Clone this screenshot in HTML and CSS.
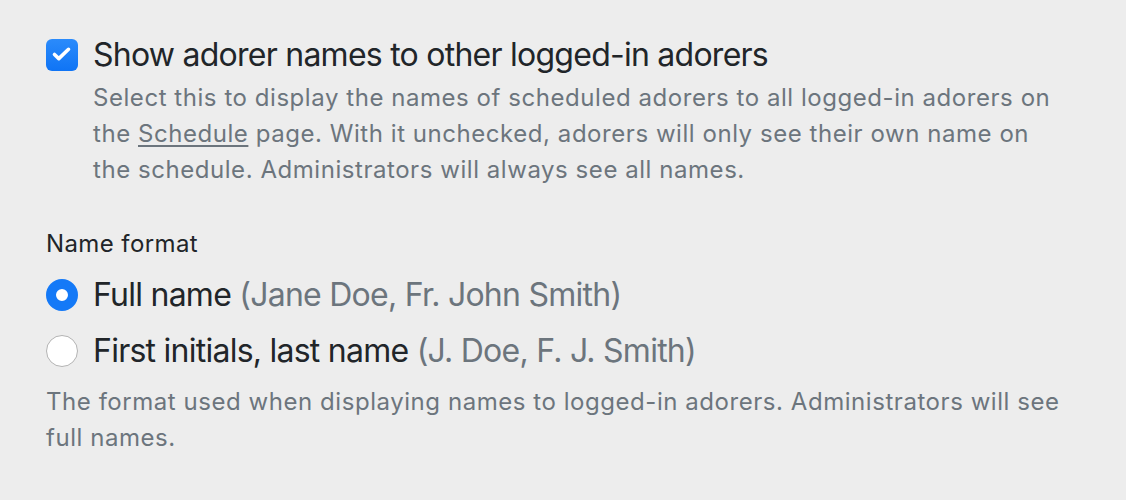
FILE: index.html
```html
<!DOCTYPE html>
<html lang="en">
<head>
<meta charset="utf-8">
<title>Name settings</title>
<link rel="stylesheet" href="styles.css">
</head>
<body>
<div class="settings">
  <div class="check-row">
    <span class="checkbox">
      <svg viewBox="0 0 32 32" width="32" height="32"><path d="M8.5 15.5 L12.8 19.6 L22.5 10.3" fill="none" stroke="#fff" stroke-width="3.6" stroke-linecap="round" stroke-linejoin="round"/></svg>
    </span>
    <span class="title">Show adorer names to other logged-in adorers</span>
    <p class="help indent">Select this to display the names of scheduled adorers to all logged-in adorers on the <a class="link" href="#">Schedule</a> page. With it unchecked, adorers will only see their own name on the schedule. Administrators will always see all names.</p>
  </div>

  <div class="group-label">Name format</div>
  <div class="radios">
    <div class="radio-row">
      <span class="radio checked"></span>
      <span class="title">Full name <span class="hint">(Jane Doe, Fr. John Smith)</span></span>
    </div>
    <div class="radio-row">
      <span class="radio"></span>
      <span class="title">First initials, last name <span class="hint">(J. Doe, F. J. Smith)</span></span>
    </div>
  </div>
  <p class="help">The format used when displaying names to logged-in adorers. Administrators will see full names.</p>
</div>
</body>
</html>
```

FILE: styles.css
```css
html, body {
  margin: 0;
  padding: 0;
  background: #ededed;
}
body {
  font-family: Inter, "Liberation Sans", sans-serif;
  color: #212529;
}
.settings {
  padding: 35px 0 0 46px;
  width: 1020px;
}
.check-row {
  display: grid;
  grid-template-columns: 32px 1fr;
  column-gap: 15px;
  align-items: center;
}
.checkbox {
  width: 32px;
  height: 32px;
  border-radius: 6px;
  background: linear-gradient(#2b8bfb, #0f74f5);
  display: block;
}
.checkbox svg { display: block; }
.title {
  font-size: 32px;
  line-height: 40px;
  letter-spacing: -0.75px;
}
.help {
  margin: 0;
  font-size: 24px;
  line-height: 36px;
  color: #6c757d;
  letter-spacing: 0.55px;
}
.indent {
  grid-column: 2;
  margin-top: 5px;
}
.link {
  color: #6c757d;
  text-decoration: underline;
  text-underline-offset: 3px;
  text-decoration-thickness: 1.5px;
}
.group-label {
  margin-top: 38px;
  font-size: 24px;
  line-height: 36px;
  letter-spacing: 0.4px;
}
.radios {
  display: flex;
  flex-direction: column;
  gap: 16px;
  margin-top: 13px;
}
.radio-row {
  display: flex;
  align-items: center;
  gap: 15px;
}
.radio {
  width: 32px;
  height: 32px;
  border-radius: 50%;
  box-sizing: border-box;
  background: #fff;
  border: 1.5px solid #b3b3b3;
  flex: none;
}
.radio.checked {
  border: 10px solid #1479f7;
  background: #fff;
}
.hint {
  color: #6c757d;
}
.radios + .help {
  margin-top: 13px;
}
```
